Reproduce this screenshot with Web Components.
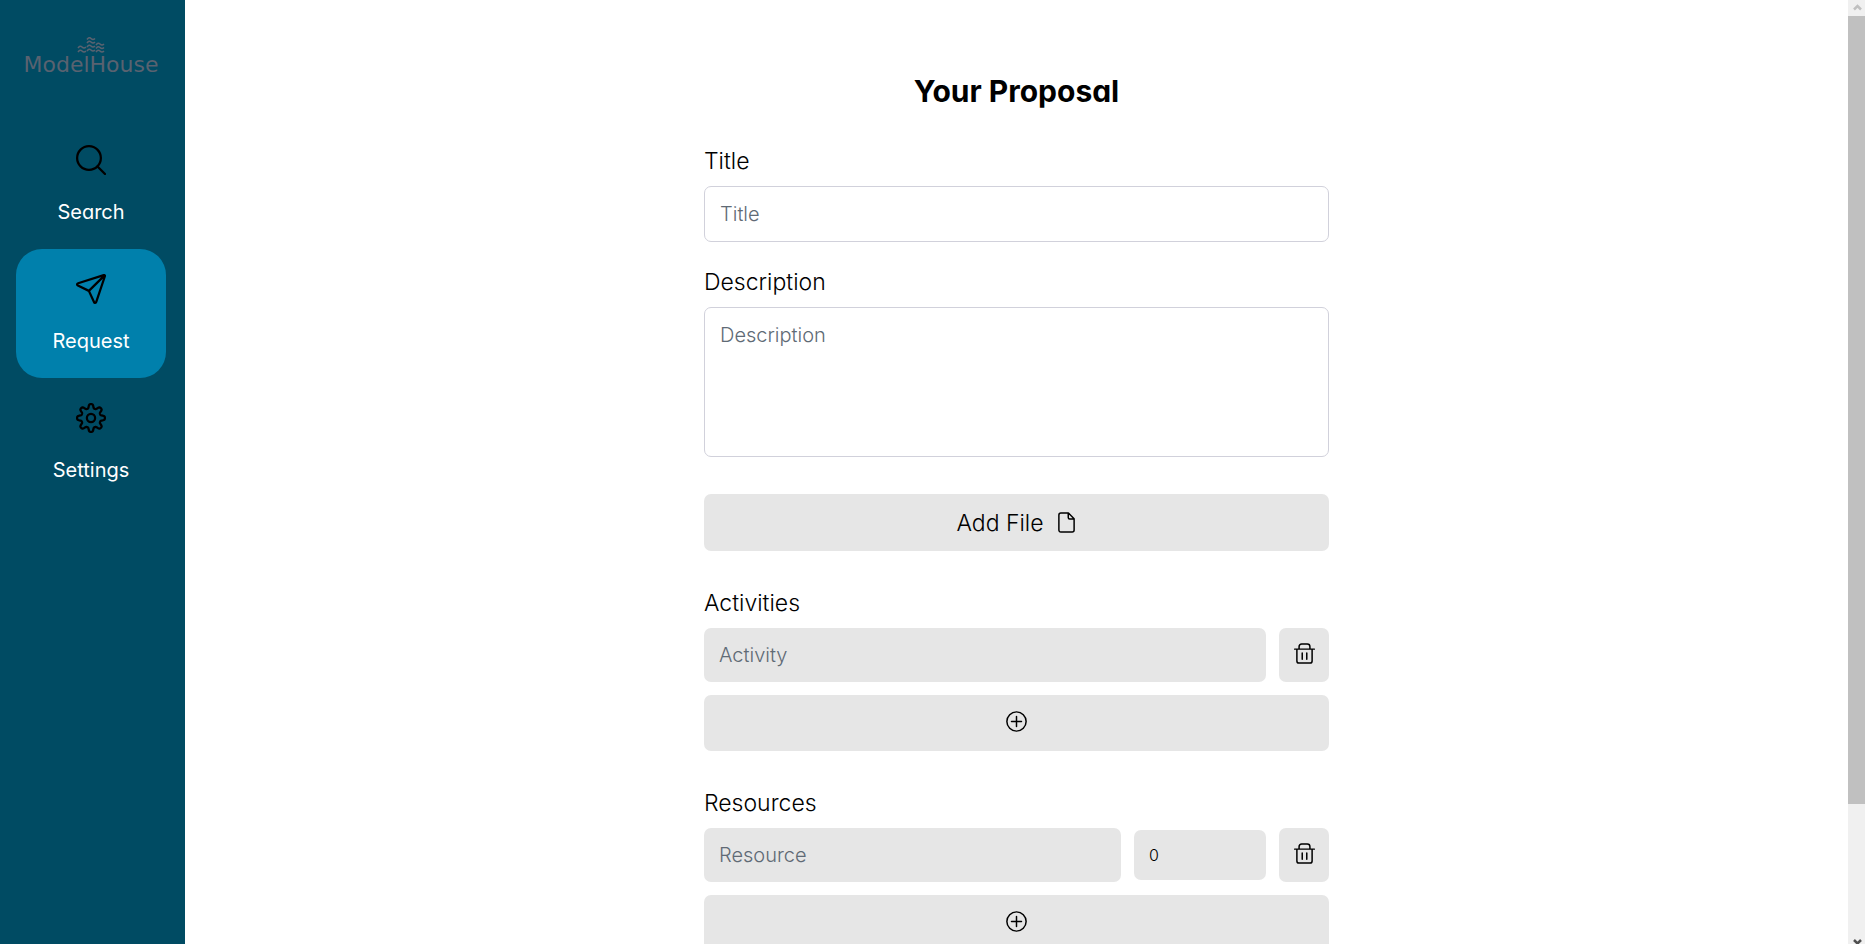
<!DOCTYPE html>
<html lang="en">
<head>
<meta charset="utf-8">
<meta name="viewport" content="width=device-width, initial-scale=1">
<title>ModelHouse</title>
<style>
html, body { margin: 0; height: 100%; }
body { font-family: Inter, "Liberation Sans", sans-serif; font-feature-settings: "cv11"; color: #000; background: #fff; overflow: hidden; }
</style>
</head>
<body>
<app-shell>
  <side-bar slot="side">
    <nav-item label="Search" icon="search"></nav-item>
    <nav-item label="Request" icon="send" active></nav-item>
    <nav-item label="Settings" icon="gear"></nav-item>
  </side-bar>
  <proposal-form></proposal-form>
  <scroll-rail slot="rail"></scroll-rail>
</app-shell>
<script>
const define = (name, html, setup) => customElements.define(name, class extends HTMLElement {
  connectedCallback() {
    if (this.shadowRoot) return;
    const root = this.attachShadow({ mode: 'open' });
    const t = document.createElement('template');
    t.innerHTML = '<style>*{box-sizing:border-box}</style>' + html;
    root.append(t.content.cloneNode(true));
    if (setup) setup(this, root);
  }
});

const gear = () => {
  // eight rounded teeth around the hub
  let d = '';
  for (let i = 0; i <= 160; i++) {
    const a = i / 160 * Math.PI * 2;
    const r = 9.5 + 1.7 * Math.tanh(1.8 * Math.cos(8 * a));
    d += (i ? 'L' : 'M') + (12 + r * Math.sin(a)).toFixed(2) + ' ' + (12 - r * Math.cos(a)).toFixed(2);
  }
  return '<circle cx="12" cy="12" r="3.3"/><path d="' + d + 'Z"/>';
};

const ICONS = {
  search: '<circle cx="10.4" cy="10.4" r="9.5"/><path d="M17.2 17.2l6 6"/>',
  send: '<path d="M22.2.9 1.7 7.4c-1 .3-1.100 1.300-.2 1.800L10.300 13.500l4.100 8.900c.4 1 1.500.9 1.800-.1L23.100 1.800c.2-.6-.3-1.100-.9-.9zM10.300 13.500 22.700 1.300"/>',
  gear: gear(),
  file: '<path d="M3.300 3.600C3.300 2.200 4.200 1.200 5.600 1.200h8.600l6.500 6.500v12.900c0 1.300-.9 2.200-2.200 2.200H5.500c-1.300 0-2.200-.9-2.200-2.200zM14 1.400v4.800c0 1 .7 1.700 1.700 1.700h4.900"/>',
  trash: '<path d="M.8 7h22.400M3.300 7v13.500c0 1.500.9 2.400 2.400 2.400h12.600c1.500 0 2.400-.9 2.400-2.400V7M5.800 7V4.200C5.800 2.400 7 1.200 8.800 1.200h6.400c1.800 0 3 1.200 3 3V7M9.400 11.500v7M14.600 11.500v7"/>',
  plus: '<circle cx="12" cy="12" r="11"/><path d="M12 6.300v11.400M6.300 12h11.400"/>'
};

define('ui-icon', `
<style>
:host{display:block;width:21px;height:21px;flex:none}
:host([large]){width:30px;height:30px}
svg{display:block;width:100%;height:100%;fill:none;stroke:currentColor;stroke-width:1.700;stroke-linecap:round;stroke-linejoin:round}
:host([large]) svg{stroke-width:1.800}
</style><svg viewBox="0 0 24 24" aria-hidden="true"></svg>`,
(el, root) => { root.querySelector('svg').innerHTML = ICONS[el.getAttribute('name')]; });

define('app-shell', `
<style>
:host{display:grid;grid-template-columns:185px minmax(0,1fr) 17px;height:100vh;overflow:hidden}
main{overflow:hidden}
</style>
<slot name="side"></slot><main><slot></slot></main><slot name="rail"></slot>`);

define('brand-logo', `
<style>
:host{display:flex;flex-direction:column;align-items:center;color:#596270}
svg{width:28px;height:16px;display:block}
span{font:22px/24px "DejaVu Sans",sans-serif}
</style>
<svg viewBox="0 0 28 16" fill="none" stroke="currentColor" stroke-width="1.500" aria-hidden="true">
<path d="M10 2.500q2-3 4 -1t4 0M10 6q2-3 4 -1t4 0M10 10q2-3 4 -1t4 0M19 8q2-3 4 -1t4 0M1 11q2-3 4 -1t4 0M10 14q2-3 4 -1t4 0M19 11.500q2-3 4 -1t4 0M1 15q2-3 4 -1t4 0M19 15q2-3 4 -1t4 0"/></svg>
<span>ModelHouse</span>`);

define('side-bar', `
<style>
:host{display:block;background:#004b63;padding:37px 19px 0 16px}
brand-logo{height:83px}
nav{display:flex;flex-direction:column}
</style>
<brand-logo></brand-logo><nav><slot></slot></nav>`);

define('nav-item', `
<style>
:host{display:block}
a{display:flex;flex-direction:column;align-items:center;gap:22px;height:129px;padding-top:25px;border-radius:26px;text-decoration:none;color:#000}
:host([active]) a{background:#0080ac}
span{font-size:20px;line-height:30px;color:#fff}
</style>
<a href="#"><span></span></a>`,
(el, root) => {
  const icon = document.createElement('ui-icon');
  icon.setAttribute('large', '');
  icon.setAttribute('name', el.getAttribute('icon'));
  root.querySelector('a').prepend(icon);
  root.querySelector('span').textContent = el.getAttribute('label');
});

const CONTROLS = `
<style>
label,h2{display:block;margin:0 0 10px;font-size:23px;line-height:30px;font-weight:300}
input,textarea,button{display:block;width:100%;margin:0;font-family:inherit;font-feature-settings:inherit;font-weight:300;color:#000;border:0;border-radius:7px;background:#e6e6e6;outline:0}
input,textarea{font-size:20px;line-height:30px;padding:12px 15px}
::placeholder{color:#606a75;opacity:1}
button{display:flex;align-items:center;justify-content:center;gap:12px;padding:0;height:56px;font-size:23px}
</style>`;

define('text-field', CONTROLS + `
<style>
:host{display:block}
input,textarea{background:#fff;border:1px solid #d1d1db;height:56px}
textarea{height:150px;resize:none}
</style>
<label for="field"></label>`,
(el, root) => {
  const text = el.getAttribute('label');
  root.querySelector('label').textContent = text;
  const field = document.createElement(el.hasAttribute('multiline') ? 'textarea' : 'input');
  field.id = 'field';
  field.placeholder = text;
  root.append(field);
});

define('item-list', CONTROLS + `
<style>
:host{display:block}
.row{display:grid;grid-template-columns:minmax(0,1fr) 50px;gap:13px;align-items:center;margin-bottom:13px}
:host([amount]) .row{grid-template-columns:minmax(0,1fr) 132px 50px}
.row input,.row button{height:54px}
.row input.amount{height:50px;font-size:16px}
.row button,.add{padding-bottom:4px}
</style>
<h2></h2><div class="row"><input class="name"><button type="button" aria-label="Delete"><ui-icon name="trash"></ui-icon></button></div>
<button class="add" type="button" aria-label="Add"><ui-icon name="plus"></ui-icon></button>`,
(el, root) => {
  root.querySelector('h2').textContent = el.getAttribute('heading');
  const name = root.querySelector('.name');
  name.placeholder = el.getAttribute('item');
  name.setAttribute('aria-label', el.getAttribute('item'));
  if (el.hasAttribute('amount')) {
    const n = document.createElement('input');
    n.className = 'amount';
    n.inputMode = 'numeric';
    n.setAttribute('aria-label', 'Amount');
    n.value = '0';
    name.after(n);
  }
});

define('proposal-form', CONTROLS + `
<style>
:host{display:block;max-width:625px;margin:0 auto;padding-top:71px}
h1{margin:0 0 35px;font-size:30px;line-height:40px;font-weight:700;text-align:center}
form{display:flex;flex-direction:column;gap:37px}
.fields{display:flex;flex-direction:column;gap:25px}
.file{height:57px}
</style>
<h1>Your Proposal</h1>
<form>
  <div class="fields"><text-field label="Title"></text-field><text-field label="Description" multiline></text-field></div>
  <button class="file" type="button">Add File<ui-icon name="file"></ui-icon></button>
  <item-list heading="Activities" item="Activity"></item-list>
  <item-list heading="Resources" item="Resource" amount></item-list>
</form>`);

define('scroll-rail', `
<style>
:host{display:grid;grid-template-rows:16px 47fr 8fr 16px;height:calc(100vh + 10px);background:#f0f0f0}
svg{display:block;width:17px;height:16px;fill:none;stroke-width:2.500}
i{background:#c0c0c0}
</style>
<svg viewBox="0 0 17 16" stroke="#c0c0c0"><path d="M6 9.500l3.500-3.500L13 9.500"/></svg><i></i><b></b>
<svg viewBox="0 0 17 16" stroke="#505050"><path d="M6 2l3.500 3.500L13 2"/></svg>`);
</script>
</body>
</html>
